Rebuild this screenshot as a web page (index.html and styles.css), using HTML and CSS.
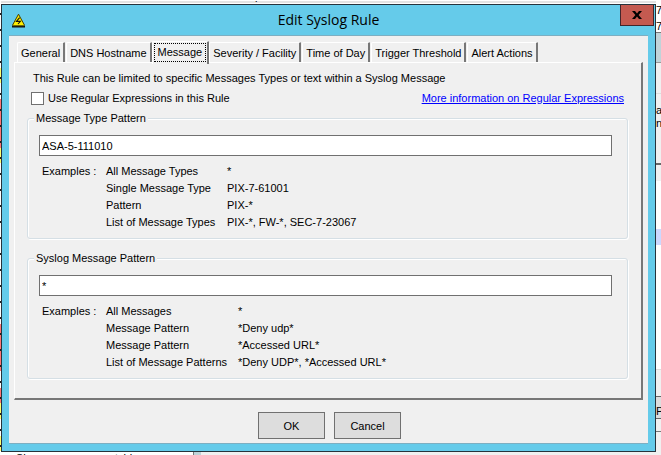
FILE: index.html
```html
<!DOCTYPE html>
<html lang="en">
<head>
<meta charset="utf-8">
<title>Edit Syslog Rule</title>
<link rel="stylesheet" href="styles.css">
</head>
<body>
<div class="backdrop" aria-hidden="true">
  <div class="log-edge"></div>
  <div class="bottom-edge"><span>Show messages matching</span></div>
  <div class="side-edge">
    <span class="s7a">7</span><span class="s7b">7</span><span class="sa">a</span><span class="sn">n</span><span class="sp">P</span>
  </div>
  <span class="top-text">p</span>
</div>
<main class="dialog">
  <header class="titlebar">
    <svg class="app-icon" viewBox="0 0 15 15" width="15" height="15" aria-hidden="true">
      <path d="M1 13.5h13" stroke="#111" stroke-width="2"/>
      <path d="M7.5 1.2 L13.4 12 Q13.4 12.8 12.5 12.8 H2.5 Q1.6 12.8 1.6 12 Z" fill="#fff000" stroke="#443f00" stroke-width="1"/>
      <path d="M8.6 4.6 L5.4 8.4 H9.4 L7 11" fill="none" stroke="#111" stroke-width="1.1"/>
    </svg>
    <h1>Edit Syslog Rule</h1>
    <button class="close" type="button" aria-label="Close">
      <svg viewBox="0 0 10 8" width="10" height="8"><path d="M0 0h3l2 2.4L7 0h3L6.6 4 10 8H7L5 5.6 3 8H0l3.4-4z" fill="#000"/></svg>
    </button>
  </header>
  <form class="client">
    <nav class="tabs" role="tablist">
      <button type="button" role="tab">General</button>
      <button type="button" role="tab">DNS Hostname</button>
      <button type="button" role="tab" aria-selected="true" class="active"><span>Message</span></button>
      <button type="button" role="tab">Severity / Facility</button>
      <button type="button" role="tab">Time of Day</button>
      <button type="button" role="tab">Trigger Threshold</button>
      <button type="button" role="tab">Alert Actions</button>
    </nav>
    <section class="panel">
      <p class="intro">This Rule can be limited to specific Messages Types or text within a Syslog Message</p>
      <div class="options">
        <label><input type="checkbox">Use Regular Expressions in this Rule</label>
        <a href="#">More information on Regular Expressions</a>
      </div>
      <fieldset>
        <legend><label for="type">Message Type Pattern</label></legend>
        <input id="type" type="text" value="ASA-5-111010">
        <table>
          <tr><th>Examples :</th><td>All Message Types</td><td>*</td></tr>
          <tr><th></th><td>Single Message Type</td><td>PIX-7-61001</td></tr>
          <tr><th></th><td>Pattern</td><td>PIX-*</td></tr>
          <tr><th></th><td>List of Message Types</td><td>PIX-*, FW-*, SEC-7-23067</td></tr>
        </table>
      </fieldset>
      <fieldset>
        <legend><label for="message">Syslog Message Pattern</label></legend>
        <input id="message" type="text" value="*">
        <table class="wide">
          <tr><th>Examples :</th><td>All Messages</td><td>*</td></tr>
          <tr><th></th><td>Message Pattern</td><td>*Deny udp*</td></tr>
          <tr><th></th><td>Message Pattern</td><td>*Accessed URL*</td></tr>
          <tr><th></th><td>List of Message Patterns</td><td>*Deny UDP*, *Accessed URL*</td></tr>
        </table>
      </fieldset>
    </section>
    <footer class="actions">
      <button type="submit">OK</button>
      <button type="button">Cancel</button>
    </footer>
  </form>
</main>
</body>
</html>
```
FILE: styles.css
```css
* { box-sizing: border-box; }
body {
  margin: 0;
  padding: 4px 5px 3px 1px;
  background: #fff;
  color: #000;
  font: 11px/16px "Liberation Sans", Arial, sans-serif;
}
button, input { font: inherit; color: inherit; }

/* Slivers of the window behind the dialog */
.backdrop { position: absolute; inset: 0; overflow: hidden; z-index: -1; background: #fff; border-top: 1px solid #fff; box-shadow: inset 0 2px #e3e3e3; }
.log-edge {
  position: absolute; left: 0; top: 0; bottom: 0; width: 1px;
  background:
    repeating-linear-gradient(transparent 0 12px, #222 12px 14px, transparent 14px 16px),
    linear-gradient(#fff 67px, #ffff70 67px 82px, #fff 82px 98px, #f77 98px 147px, #ffff70 147px 162px, #fff 162px 323px, #f77 323px 370px, #fff 370px 387px, #f77 387px 402px, #ffff70 402px 418px, #fff 418px 435px, #ffff70 435px 450px, #fff 450px);
}
.side-edge {
  position: absolute; right: 0; top: 0; bottom: 0; width: 5px; overflow: hidden;
  background: linear-gradient(#fff 31px, #777 31px 32px, #c0d3d8 32px 61px, #999 61px 62px, #f0f0f0 62px 92px, #ddd 92px 93px, #f0f0f0 93px 162px, #666 162px 164px, #f0f0f0 164px 180px, #fff 180px 228px, #ccd8ff 228px 244px, #fff 244px 368px, #ddd 368px 369px, #f0f0f0 369px 395px, #666 395px 396px, #ddd 396px 417px, #666 417px 418px, #f0f0f0 418px 430px, #777 430px 431px, #f0f0f0 431px);
}
.side-edge span { position: absolute; left: 0; }
.s7a { top: 1px; } .s7b { top: 17px; } .sa { top: 101px; } .sn { top: 114px; } .sp { top: 402px; }
.bottom-edge { position: absolute; left: 0; right: 0; bottom: 0; height: 3px; overflow: hidden; background: linear-gradient(90deg, #fff 193px, #777 193px 194px, #c0d3d8 194px 201px, #f0f0f0 201px); }
.bottom-edge span { display: block; padding-left: 16px; margin-top: -2px; }
.top-text { position: absolute; left: 255px; top: -13px; }

.dialog { border: 1px solid #26333c; background: #65cbea; padding: 0 7px 7px; }
.titlebar { display: grid; grid-template-columns: 1fr auto 1fr; align-items: center; height: 30px; }
.app-icon { margin-left: 2px; }
h1 { margin: 0; font: 14px/20px "Open Sans", "Noto Sans", sans-serif; }
.close { align-self: start; justify-self: end; display: flex; align-items: center; justify-content: center; width: 34px; height: 21px; margin-right: -6px; padding: 0; border: 1px solid #43262b; border-top: 0; background: #c45a50; }

.client { background: #f0f0f0; border-top: 1px solid #7dafc2; border-bottom: 1px solid #7dafc2; padding: 5px 5px 4px; }
.tabs { display: flex; align-items: flex-end; gap: 1px; height: 21px; padding-left: 3px; }
.tabs button { height: 20px; padding: 0 3px; border: 1px solid #fff; border-right: 2px solid #777; border-bottom: 0; border-radius: 2px 1px 0 0; background: #f0f0f0; white-space: nowrap; }
.tabs .active { position: relative; height: 23px; margin: 0 -1px -2px; padding: 1px 1px 2px; }
.active span { display: block; border: 1px dotted #000; padding: 0 3px; line-height: 17px; }

.panel { border: 1px solid #fff; border-right: 2px solid #777; border-bottom: 2px solid #777; padding: 7px 13px 19px 12px; }
.intro { margin: 0 0 4px 6px; }
.options { display: flex; justify-content: space-between; height: 16px; margin: 0 4px 4px; }
.options label { display: flex; align-items: center; gap: 4px; }
input[type="checkbox"] { appearance: none; width: 13px; height: 13px; margin: 0; border: 1px solid #707070; background: #fff; }
a { color: #00f; }

fieldset { min-width: 0; margin: 0 0 11px; padding: 9px 15px 7px 11px; border: 1px solid #d5dfe5; border-radius: 3px; box-shadow: 1px 1px #fff, inset 1px 1px #fff; }
fieldset:last-child { margin-bottom: 0; }
legend { margin-left: -5px; padding: 0 2px; background: #f0f0f0; }
input[type="text"] { display: block; width: 100%; height: 21px; padding: 0 2px; border: 1px solid #707070; background: #fff; }
table { width: 100%; margin-top: 7px; border-collapse: collapse; table-layout: fixed; line-height: 17px; }
th { width: 67px; padding: 0 0 0 3px; text-align: left; font-weight: normal; }
td { padding: 0; }
td:nth-child(2) { width: 121px; }
.wide td:nth-child(2) { width: 132px; }

.actions { display: flex; justify-content: center; gap: 9px; padding: 12px 0 0 2px; }
.actions button { width: 67px; height: 27px; padding: 0; border: 1px solid #707070; background: #ddd; }
```
